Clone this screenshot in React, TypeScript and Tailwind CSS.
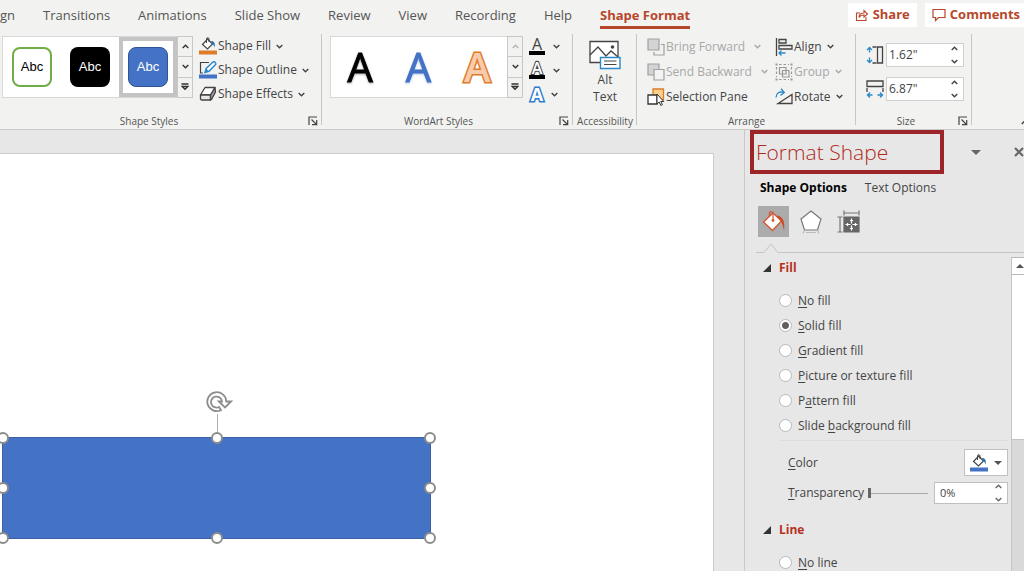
import { useState } from "react";
import type { ReactNode } from "react";

const tabs = ["gn", "Transitions", "Animations", "Slide Show", "Review", "View", "Recording", "Help"];

const fillOptions = [
  { id: "none", before: "", key: "N", after: "o fill" },
  { id: "solid", before: "", key: "S", after: "olid fill" },
  { id: "gradient", before: "", key: "G", after: "radient fill" },
  { id: "picture", before: "", key: "P", after: "icture or texture fill" },
  { id: "pattern", before: "P", key: "a", after: "ttern fill" },
  { id: "background", before: "Slide ", key: "b", after: "ackground fill" },
];

function Chevron({ up = false, className = "" }: { up?: boolean; className?: string }) {
  return (
    <svg viewBox="0 0 7 5" className={`w-[7px] h-[5px] shrink-0 ${className}`} fill="none" stroke="currentColor" strokeWidth="1.4">
      <path d={up ? "M.7 4 3.5 1.2 6.3 4" : "M.7 1 3.5 3.8 6.3 1"} />
    </svg>
  );
}

function Launcher({ label }: { label: string }) {
  return (
    <button aria-label={label} className="text-[#444]">
      <svg viewBox="0 0 10 10" className="w-2.5 h-2.5" fill="none" stroke="currentColor" strokeWidth="1.2">
        <path d="M1 9V1h8M3.5 3.5 8.5 8.5M8.7 4v4.7H4" />
      </svg>
    </button>
  );
}

function Group({ title, launcher, className = "", children }: { title: string; launcher?: boolean; className?: string; children: ReactNode }) {
  return (
    <section className={`relative flex flex-col shrink-0 ${className}`}>
      <div className="flex flex-1 items-start">{children}</div>
      <div className="flex items-center h-4 text-[10px] leading-4 text-[#555]">
        <span className={`flex-1 text-center whitespace-nowrap ${launcher ? "pr-3" : ""}`}>{title}</span>
        {launcher && <Launcher label={`${title} settings`} />}
      </div>
      <div className="absolute right-0 top-0 bottom-1 w-px bg-[#c6c6c6]" />
    </section>
  );
}

function GalleryArrows({ dimUp = false }: { dimUp?: boolean }) {
  return (
    <div className="flex flex-col w-4 h-[62px] border border-[#c8c8c8] divide-y divide-[#c8c8c8] text-[#333]">
      <button aria-label="Previous row" className={`flex flex-1 items-center justify-center ${dimUp ? "text-[#b5b5b5]" : ""}`}>
        <Chevron up />
      </button>
      <button aria-label="Next row" className="flex flex-1 items-center justify-center">
        <Chevron />
      </button>
      <button aria-label="More styles" className="flex flex-1 items-center justify-center">
        <svg viewBox="0 0 8 8" className="w-2 h-2" fill="none" stroke="currentColor" strokeWidth="1.3">
          <path d="M0.5 1h7M1.2 3.500 4 6.300 6.800 3.500z" />
        </svg>
      </button>
    </div>
  );
}

function BucketIcon({ color }: { color: string }) {
  return (
    <svg viewBox="0 0 18 18" className="w-[18px] h-[18px]" fill="none">
      <path d="M8.500 2 13.500 7 8.500 12 3.500 7.500z" fill="#fff" stroke="#444" strokeWidth="1.200" />
      <path d="M7.500 6V2c0-1.800 2.500-1.800 2.500 0v3" stroke="#444" />
      <path d="M12 4c3.200 0 4.500 2.500 3.600 6.500-.8-2.300-1.600-3.200-2.600-4z" fill="#2b72b8" />
      <path d="M0 13.500h18v4H0z" fill={color} />
    </svg>
  );
}

function OutlineIcon() {
  return (
    <svg viewBox="0 0 18 18" className="w-[18px] h-[18px]" fill="none">
      <path d="M10 1.500H1.500V12H4" stroke="#444" strokeWidth="1.200" />
      <path d="M6 11.500 7.200 7.500 14 1c1.200-1 3.500 1 2.500 2.500L10 10.300z" fill="#fff" stroke="#2b88c8" strokeWidth="1.400" />
      <path d="M5.500 12 7 7.500 10 10.300z" fill="#2b88c8" />
      <path d="M0 13.500h18v4H0z" fill="#4472c4" />
    </svg>
  );
}

function EffectsIcon() {
  return (
    <svg viewBox="0 0 18 18" className="w-[18px] h-[18px]" fill="none" stroke="#444" strokeWidth="1.300" strokeLinejoin="round">
      <path d="M6 2.500h10L11.500 10H1.500z" fill="#fff" />
      <path d="M1.500 10h10v5H3c-1 0-1.500-.5-1.500-1.500z" fill="#e8e8e8" />
      <path d="M16 2.500 16.500 7 12.500 14.500 11.500 15V10z" fill="#999" />
    </svg>
  );
}

function ForwardIcon() {
  return (
    <svg viewBox="0 0 18 18" className="w-[18px] h-[18px]" fill="none" stroke="#a0a0a0" strokeWidth="1.200">
      <path d="M1 1h11v11H1z" fill="#d4d4d4" />
      <path d="M14 6.500h3V17H7v-3" />
    </svg>
  );
}

function BackwardIcon() {
  return (
    <svg viewBox="0 0 18 18" className="w-[18px] h-[18px]" fill="none" stroke="#a0a0a0" strokeWidth="1.200">
      <path d="M1 1h11v11H1z" fill="#d4d4d4" />
      <path d="M7 6.500h10V17H7z" fill="#f3f3f3" />
    </svg>
  );
}

function SelectionIcon() {
  return (
    <svg viewBox="0 0 18 18" className="w-[18px] h-[18px]" fill="none">
      <path d="M6 1h10.500v10.500H6z" fill="#fbd28d" stroke="#e07b28" strokeWidth="1.300" />
      <path d="M1 7h9v9H1z" fill="#fff" stroke="#333" strokeWidth="1.300" />
      <path d="M10 6v10l2.200-2 1.600 3.500 1.600-.8L13.800 13.500h3z" fill="#fff" stroke="#333" />
    </svg>
  );
}

function AlignIcon() {
  return (
    <svg viewBox="0 0 18 18" className="w-[18px] h-[18px]" fill="none" strokeWidth="1.300">
      <path d="M1.500 0v18M4 1.500h7v3.500H4zM4 7.500h13v3.500H4z" stroke="#444" />
      <path d="M10.500 15H4M6.500 12.500 4 15l2.500 2.500" stroke="#2b88c8" />
    </svg>
  );
}

function GroupIcon() {
  return (
    <svg viewBox="0 0 18 18" className="w-[18px] h-[18px]" fill="none" stroke="#999" strokeWidth="1.200">
      <path d="M4.500 4.500h6.500v6.500H4.500zM7.500 7.500h6.500v6.500H7.500z" />
      <path d="M1.500 4v10M16.500 4v10M4 1.500h10M4 16.500h10" strokeDasharray="2.500 2" />
      <path d="M.5.5h2v2h-2zM15.500.5h2v2h-2zM.5 15.500h2v2h-2zM15.500 15.500h2v2h-2z" fill="#999" stroke="none" />
    </svg>
  );
}

function RotateIcon() {
  return (
    <svg viewBox="0 0 18 18" className="w-[18px] h-[18px]" fill="none" strokeWidth="1.300">
      <path d="M3 15.500h14V6.500z" stroke="#444" />
      <path d="M1 9.500C1 5 4.500 3 9 4.500M6 .8l3.300 3.700L5.500 7.500" stroke="#2b88c8" />
    </svg>
  );
}

function AltTextIcon() {
  return (
    <svg viewBox="0 0 32 30" className="w-8 h-[30px]" fill="none">
      <path d="M1 1.500h28v21H1z" fill="#fff" stroke="#444" strokeWidth="1.300" />
      <path d="M1 15 9 7l8 9 5-5 7 6" stroke="#444" strokeWidth="1.300" />
      <circle cx="23.500" cy="7" r="1.800" fill="#444" />
      <path d="M11.500 17.500h19.500v11H11.500z" fill="#fff" stroke="#2b88c8" strokeWidth="1.400" />
      <path d="M15 21h12.500M15 24.500h12.500" stroke="#444" strokeWidth="1.200" />
    </svg>
  );
}

function HeightIcon() {
  return (
    <svg viewBox="0 0 18 18" className="w-[18px] h-[18px]" fill="none" strokeWidth="1.300">
      <path d="M3.500 1.500v5M1 4l2.500-2.500L6 4M3.500 16.500v-5M1 14l2.500 2.500L6 14" stroke="#2b88c8" />
      <path d="M6.500 1h4M6.500 17h4M11.500 1h5v16h-5z" stroke="#444" />
    </svg>
  );
}

function WidthIcon() {
  return (
    <svg viewBox="0 0 18 18" className="w-[18px] h-[18px]" fill="none" strokeWidth="1.300">
      <path d="M1 1h16v5.500H1zM1 8v4M17 8v4" stroke="#444" />
      <path d="M1.500 15h5M4 12.500 1.500 15 4 17.500M16.500 15h-5M14 12.500l2.500 2.500-2.500 2.500" stroke="#2b88c8" />
    </svg>
  );
}

function Spinner({ className = "" }: { className?: string }) {
  return (
    <div className={`flex flex-col justify-center gap-2 pr-[5px] ${className}`}>
      <button aria-label="Increase"><Chevron up /></button>
      <button aria-label="Decrease"><Chevron /></button>
    </div>
  );
}

function SizeField({ label, icon, value }: { label: string; icon: ReactNode; value: string }) {
  return (
    <label className="flex items-center gap-0.5">
      {icon}
      <span className="flex w-[78px] h-6 bg-white border border-[#d0d0d0]">
        <input aria-label={label} defaultValue={value} className="flex-1 min-w-0 pl-0.5 text-xs text-[#444] outline-none" />
        <Spinner className="text-[#444]" />
      </span>
    </label>
  );
}

function Radio({ name, checked, onChange, children }: { name: string; checked: boolean; onChange: () => void; children: ReactNode }) {
  return (
    <label className="flex items-center gap-1.5 h-[25px]">
      <input
        type="radio"
        name={name}
        checked={checked}
        onChange={onChange}
        className="appearance-none w-[13px] h-[13px] rounded-full border border-[#b8b8b8] bg-white checked:bg-[radial-gradient(circle,#606060_3px,white_4px)]"
      />
      <span>{children}</span>
    </label>
  );
}

function SectionTitle({ children }: { children: ReactNode }) {
  return (
    <button className="flex items-center gap-2 h-4 font-bold text-xs text-[#b7321c]">
      <svg viewBox="0 0 8 8" className="w-2 h-2">
        <path d="M8 0v8H0z" fill="#333" />
      </svg>
      {children}
    </button>
  );
}

function Ribbon() {
  return (
    <div className="flex h-24 bg-[#f2f2f1] border-b border-[#c9c9c9] text-xs text-[#444]">
      <Group title="Shape Styles" launcher className="w-[322px] pl-0.5 pr-1">
        <div className="flex mt-0.5">
          <div className="flex items-center h-[62px] bg-white border-y border-l border-[#d8d8d8] font-['Liberation_Sans',sans-serif] text-[13px]">
            <button className="w-10 h-10 ml-[9px] rounded-lg border-2 border-[#70ad47] text-black">Abc</button>
            <button className="w-10 h-10 ml-[18px] rounded-lg bg-black text-white">Abc</button>
            <span className="flex items-center justify-center w-[58px] h-[60px] ml-[9px] border-4 border-[#c4c4c4]">
              <button className="w-10 h-10 rounded-lg border border-[#2f5597] bg-[#4472c4] text-white">Abc</button>
            </span>
          </div>
          <GalleryArrows />
        </div>
        <div className="flex flex-col ml-1.5 items-start">
          <button className="flex items-center gap-px h-6"><BucketIcon color="#e07b28" />Shape Fill <Chevron className="ml-1" /></button>
          <button className="flex items-center gap-px h-6"><OutlineIcon />Shape Outline <Chevron className="ml-1" /></button>
          <button className="flex items-center gap-px h-6"><EffectsIcon />Shape Effects <Chevron className="ml-1" /></button>
        </div>
      </Group>

      <Group title="WordArt Styles" launcher className="w-[251px] pl-2 pr-1">
        <div className="flex mt-0.5">
          <div className="flex items-center justify-around w-[177px] h-[62px] bg-white border-y border-l border-[#d8d8d8] text-[40px] leading-[60px] font-medium">
            <button className="text-black [-webkit-text-stroke:1px_black] drop-shadow-[0_1px_1px_#aaa]">A</button>
            <button className="text-[#4472c4] [-webkit-text-stroke:1px_#4472c4] drop-shadow-[0_1px_1px_#b4c7e7]">A</button>
            <button className="font-semibold text-[#f8cbad] [-webkit-text-stroke:3px_#e07b28] [paint-order:stroke_fill]">A</button>
          </div>
          <GalleryArrows dimUp />
        </div>
        <div className="flex flex-col ml-1.5 text-base leading-4">
          <button aria-label="Text fill" className="flex items-center gap-2 h-6">
            <span className="w-4 h-[18px] border-b-4 border-black leading-[14px]">A</span><Chevron />
          </button>
          <button aria-label="Text outline" className="flex items-center gap-2 h-6">
            <span className="w-4 h-[18px] border-b-4 border-black leading-[14px] font-semibold text-white [-webkit-text-stroke:2px_#444] [paint-order:stroke_fill]">A</span><Chevron />
          </button>
          <button aria-label="Text effects" className="flex items-center gap-1.5 h-6">
            <span className="w-4 text-lg leading-4 font-bold text-white [-webkit-text-stroke:3px_#2b7cd0] [paint-order:stroke_fill]">A</span><Chevron />
          </button>
        </div>
      </Group>

      <Group title="Accessibility" className="w-16">
        <button className="flex flex-col items-center w-full pt-1.5 leading-[17px]">
          <AltTextIcon />
          <span className="mt-px">Alt</span>
          <span>Text</span>
        </button>
      </Group>

      <Group title="Arrange" className="w-[219px]">
        <div className="flex flex-col items-start w-[138px] pl-2.5">
          <button disabled className="flex items-center gap-px h-[25px] text-[#a8a8a8] whitespace-nowrap"><ForwardIcon />Bring Forward <Chevron className="ml-2" /></button>
          <button disabled className="flex items-center gap-px h-[25px] text-[#a8a8a8] whitespace-nowrap"><BackwardIcon />Send Backward <Chevron className="ml-2" /></button>
          <button className="flex items-center gap-px h-[25px] whitespace-nowrap"><SelectionIcon />Selection Pane</button>
        </div>
        <div className="flex flex-col items-start">
          <button className="flex items-center gap-px h-[25px]"><AlignIcon />Align <Chevron className="ml-1" /></button>
          <button disabled className="flex items-center gap-px h-[25px] text-[#a8a8a8]"><GroupIcon />Group <Chevron className="ml-1" /></button>
          <button className="flex items-center gap-px h-[25px]"><RotateIcon />Rotate <Chevron className="ml-1" /></button>
        </div>
      </Group>

      <Group title="Size" launcher className="w-[116px] pl-2.5 pr-1">
        <div className="flex flex-col gap-2.5 pt-[9px]">
          <SizeField label="Shape height" icon={<HeightIcon />} value={'1.62"'} />
          <SizeField label="Shape width" icon={<WidthIcon />} value={'6.87"'} />
        </div>
      </Group>
      <button aria-label="Collapse ribbon" className="ml-auto self-end pb-1 -mr-1"><Chevron up /></button>
    </div>
  );
}

function Handle({ className }: { className: string }) {
  return <span className={`absolute w-3 h-3 -ml-1.5 -mt-1.5 rounded-full bg-white border-2 border-[#8c8c8c] ${className}`} />;
}

function Slide() {
  return (
    <div className="relative flex-1 mt-[23px] mr-[30px] bg-white border-t border-r border-[#cbcbcb]">
      {/* Selected rectangle */}
      <div className="absolute left-0.5 top-[283px] w-[429px] h-[102px] bg-[#4472c4] border border-[#3a61a8]">
        <span className="absolute left-1/2 -top-6 w-px h-6 bg-[#b0b0b0]" />
        <svg viewBox="0 0 28 24" className="absolute left-1/2 -top-12 -ml-3 w-7 h-6" fill="none" stroke="#8c8c8c" strokeWidth="1.800">
          <path d="M16 20.200A9.500 9.500 0 1 1 21.300 11.500H26L20 17.500 13.800 11.500H17A5.500 5.500 0 1 0 14 17z" fill="#fff" />
        </svg>
        <Handle className="left-0 top-0" />
        <Handle className="left-1/2 top-0" />
        <Handle className="left-full top-0" />
        <Handle className="left-0 top-1/2" />
        <Handle className="left-full top-1/2" />
        <Handle className="left-0 top-full" />
        <Handle className="left-1/2 top-full" />
        <Handle className="left-full top-full" />
      </div>
    </div>
  );
}

function FormatPane() {
  const [fill, setFill] = useState("solid");
  const [line, setLine] = useState("");
  const [transparency, setTransparency] = useState(0);

  return (
    <aside className="flex flex-col w-[280px] shrink-0 border-l border-[#c9c9c9] text-xs text-[#444]">
      <div className="flex items-center pl-[5px]">
        <h2 className="w-[194px] h-11 pl-0.5 border-4 border-[#9c2529] text-[21px] leading-9 font-light text-[#b02a1c]">Format Shape</h2>
        <button aria-label="Pane options" className="ml-[27px]">
          <svg viewBox="0 0 10 5" className="w-2.5 h-[5px]"><path d="M0 0h10L5 5z" fill="#666" /></svg>
        </button>
        <button aria-label="Close pane" className="ml-auto">
          <svg viewBox="0 0 10 10" className="w-2.5 h-2.5" stroke="#666" strokeWidth="2.200"><path d="M1 1l8 8M9 1 1 9" /></svg>
        </button>
      </div>

      <div className="flex gap-[18px] mt-1.5 pl-[15px] leading-4">
        <button className="font-bold text-black">Shape Options</button>
        <button>Text Options</button>
      </div>

      <div className="flex items-center gap-2.5 mt-2.5 pl-[13px]">
        <button aria-label="Fill and line" className="flex items-center justify-center w-[31px] h-[31px] bg-[#ababab]">
          <svg viewBox="0 0 24 24" className="w-6 h-6" fill="none">
            <path d="M7.500 8V3.500c0-2.500 3.500-2.500 3.500 0V5" stroke="#d05a35" strokeWidth="1.300" />
            <path d="M11 3 19.500 11 10.500 20.500 1.500 12z" fill="#fff" stroke="#d05a35" strokeWidth="1.400" />
            <path d="M11 3.500V10" stroke="#d05a35" strokeWidth="1.200" />
            <circle cx="11" cy="10.500" r="1.400" fill="#d05a35" />
            <path d="M14.500 5.500c5 .5 9 4 7.500 15-1-4.500-1.500-6.500-3-9z" fill="#cc4a25" />
          </svg>
        </button>
        <button aria-label="Effects">
          <svg viewBox="0 0 24 26" className="w-6 h-[26px]" fill="none" stroke="#777" strokeWidth="1.200">
            <path d="M12 2 22 10 18.500 21h-13L2 10z" fill="#fff" />
            <path d="M5.500 21 4 24.500M18.500 21 20 24.500M7 23.500h10" stroke="#bbb" />
          </svg>
        </button>
        <button aria-label="Size and properties" className="ml-1">
          <svg viewBox="0 0 24 24" className="w-6 h-6" fill="none" stroke="#777" strokeWidth="1.200">
            <path d="M7 3h15M7 .5v5M22 .5v5M3 7v15M.5 7h5M.5 22h5" />
            <path d="M7 7h15v15H7z" fill="#666" stroke="#666" />
            <path d="M14.500 8.500v5M14.500 15.500v5M8.500 14.500h5M15.500 14.500h5M13 10.500h3M13 18.500h3M10.500 13v3M18.500 13v3" stroke="#fff" />
          </svg>
        </button>
      </div>

      {/* Divider that points at the open icon tab */}
      <div className="flex items-end mt-1.5 pl-[11px]">
        <span className="w-2 h-px bg-[#c4c4c4]" />
        <svg viewBox="0 0 14 10" className="w-3.5 h-2.5" fill="none" stroke="#c4c4c4"><path d="M0 9.500 7 1l7 8.500" /></svg>
        <span className="flex-1 h-px bg-[#c4c4c4]" />
      </div>

      <div className="flex flex-1 min-h-0">
        <div className="flex-1 min-w-0 pl-[18px] pt-[7px] pr-[3px] overflow-hidden">
          <SectionTitle>Fill</SectionTitle>
          <div className="mt-3 pl-4">
            {fillOptions.map((o) => (
              <Radio key={o.id} name="fill" checked={fill === o.id} onChange={() => setFill(o.id)}>
                {o.before}<u className="underline-offset-2">{o.key}</u>{o.after}
              </Radio>
            ))}
          </div>
          <div className="mt-0.5 ml-4 h-px bg-[#dedede]" />

          <div className="flex items-center justify-between mt-2 pl-[25px]">
            <span><u className="underline-offset-2">C</u>olor</span>
            <button aria-label="Fill color" className="flex items-center justify-center gap-1.5 w-11 h-[27px] bg-white border border-[#c0c0c0]">
              <BucketIcon color="#4472c4" />
              <svg viewBox="0 0 8 4" className="w-2 h-1"><path d="M0 0h8L4 4z" fill="#555" /></svg>
            </button>
          </div>

          <div className="flex items-center mt-1.5 pl-[25px]">
            <label htmlFor="transparency"><u className="underline-offset-2">T</u>ransparency</label>
            <input
              id="transparency"
              type="range"
              min={0}
              max={100}
              value={transparency}
              onChange={(e) => setTransparency(Number(e.target.value))}
              className="appearance-none w-[60px] h-3 ml-auto bg-[linear-gradient(#aaa,#aaa)] bg-[length:100%_1px] bg-center bg-no-repeat [&::-webkit-slider-thumb]:appearance-none [&::-webkit-slider-thumb]:w-[3px] [&::-webkit-slider-thumb]:h-2.5 [&::-webkit-slider-thumb]:bg-[#666]"
            />
            <span className="flex w-[74px] h-[22px] ml-1.5 bg-white border border-[#c0c0c0]">
              <input aria-label="Transparency value" readOnly value={`${transparency}%`} className="flex-1 min-w-0 pl-[5px] text-[11px] outline-none" />
              <Spinner className="text-[#666]" />
            </span>
          </div>

          <div className="mt-[18px]">
            <SectionTitle>Line</SectionTitle>
          </div>
          <div className="mt-3 pl-4">
            <Radio name="line" checked={line === "none"} onChange={() => setLine("none")}>
              <u className="underline-offset-2">N</u>o line
            </Radio>
          </div>
        </div>

        {/* Scrollbar */}
        <div className="flex flex-col w-[13px] mt-1 bg-[#d9d9d9] border-l border-[#c4c4c4]">
          <button aria-label="Scroll up" className="flex items-center justify-center h-[18px] pl-1 bg-white border-y border-[#b8b8b8]">
            <svg viewBox="0 0 8 4" className="w-2 h-1"><path d="M0 4h8L4 0z" fill="#555" /></svg>
          </button>
          <div className="h-[165px] bg-white border-b border-[#c4c4c4]" />
        </div>
      </div>
    </aside>
  );
}

export default function App() {
  return (
    <div className="flex flex-col h-screen overflow-hidden bg-[#e7e7e7] font-['Open_Sans','Noto_Sans',sans-serif]">
      <header className="flex h-[34px] bg-[#f2f2f1] text-[13px] text-[#555]">
        <nav className="flex items-center gap-7 h-8">
          {tabs.map((tab) => (
            <a key={tab} href="#" className="whitespace-nowrap">{tab}</a>
          ))}
          <a href="#" className="whitespace-nowrap pt-[3px] border-b-[3px] border-[#b7472a] font-bold text-[#b7472a]">Shape Format</a>
        </nav>
        <div className="flex gap-2 ml-auto mt-[3px] h-6 font-bold text-[#b7472a]">
          <button className="flex items-center gap-1 px-[7px] bg-white">
            <svg viewBox="0 0 14 14" className="w-3.5 h-3.5" fill="none" stroke="currentColor" strokeWidth="1.100">
              <path d="M5 5H1.500v7.500h9.500V9M4 9.500C4 6.500 6 5 9 5V2.500L12.500 6 9 9V7C7 7 5 7.500 4 9.500z" />
            </svg>
            Share
          </button>
          <button className="flex items-center gap-1 pl-[7px] pr-1 bg-white">
            <svg viewBox="0 0 14 14" className="w-3.5 h-3.5" fill="none" stroke="currentColor" strokeWidth="1.200">
              <path d="M1 1.500h12v8H6.500L3.500 12.500v-3H1z" />
            </svg>
            Comments
          </button>
        </div>
      </header>
      <Ribbon />
      <main className="flex flex-1 min-h-0">
        <Slide />
        <FormatPane />
      </main>
    </div>
  );
}
